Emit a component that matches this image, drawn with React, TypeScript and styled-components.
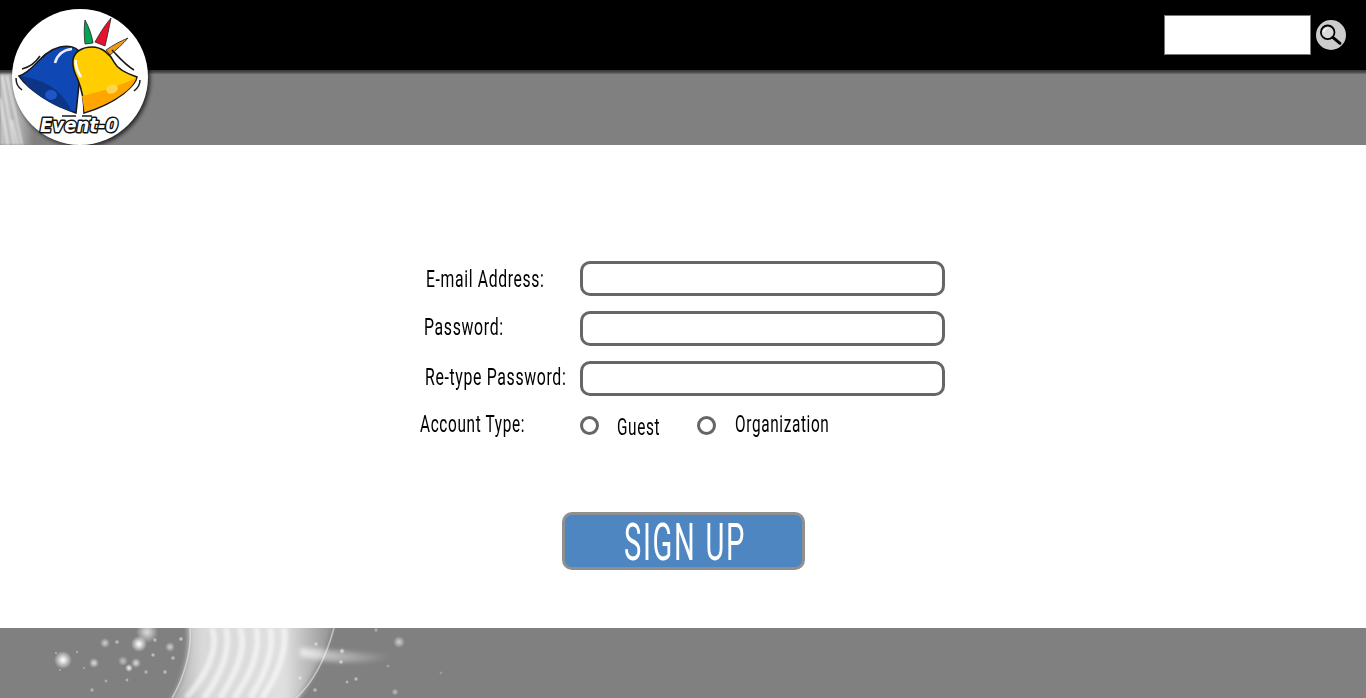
import styled, { createGlobalStyle } from "styled-components";

const GlobalStyle = createGlobalStyle`
    html, body {
        margin: 0;
        padding: 0;
        background: #fff;
    }
    body {
        font-family: "Roboto", "Liberation Sans", sans-serif;
    }
`;

const DivRoot = styled.div`
    position: relative;
    display: flex;
    flex-direction: column;
    width: 1366px;
    height: 698px;
    overflow: hidden;
`;

const Header = styled.header`
    position: relative;
    display: flex;
    flex-direction: column;
    height: 145px;
    flex: none;
`;

const TopBar = styled.div`
    height: 70px;
    background: #000;
    display: flex;
    justify-content: flex-end;
    align-items: flex-start;
    gap: 5px;
    padding: 15px 20px 0 0;
    box-sizing: border-box;
`;

const Divider = styled.div`
    height: 4px;
    background: linear-gradient(#333333, #4a4a4a 50%, #6e6e6e);
`;

const GreyBand = styled.div`
    flex: 1;
    background: #808080;
`;

const SearchInput = styled.input`
    width: 147px;
    height: 40px;
    box-sizing: border-box;
    border: 1px solid #777;
    background: #fff;
    padding: 0 4px;
    outline: none;
`;

const SearchButton = styled.button`
    width: 30px;
    height: 30px;
    margin-top: 5px;
    padding: 0;
    border: 0;
    border-radius: 50%;
    background: #cccccc;
    display: flex;
    align-items: center;
    justify-content: center;
`;

const LogoWrap = styled.div`
    position: absolute;
    left: 0;
    top: 0;
    width: 160px;
    height: 145px;
`;

const Main = styled.main`
    flex: 1;
    background: #fff;
    display: flex;
    flex-direction: column;
    align-items: flex-start;
    padding: 116px 0 0 420px;
    box-sizing: border-box;
`;

const Form = styled.form`
    display: flex;
    flex-direction: column;
    gap: 15px;
`;

const Row = styled.div`
    display: flex;
    align-items: center;
    height: 35px;
`;

const RadioRow = styled(Row)`
    height: 28px;
`;

const LabelCell = styled.div<{ $indent: number; $shift?: number }>`
    width: 160px;
    flex: none;
    padding-left: ${p => p.$indent}px;
    box-sizing: border-box;
    margin-top: ${p => p.$shift || 0}px;
`;

const Narrow = styled.span<{ $size?: number; $scale?: number; $spacing?: number }>`
    display: inline-block;
    white-space: nowrap;
    font-size: ${p => p.$size || 24}px;
    line-height: 1;
    letter-spacing: ${p => p.$spacing ?? 1}px;
    color: #000;
    transform: scaleX(${p => p.$scale || 0.64});
    transform-origin: left center;
`;

const TextInput = styled.input`
    width: 365px;
    height: 35px;
    box-sizing: border-box;
    border: 3px solid #666666;
    border-radius: 10px;
    background: #fff;
    padding: 0 8px;
    outline: none;
`;

const RadioOption = styled.label<{ $width: number; $textShift: number; $gap: number }>`
    display: flex;
    align-items: center;
    width: ${p => p.$width}px;
    flex: none;
    gap: ${p => p.$gap}px;
    span {
        margin-top: ${p => p.$textShift}px;
    }
`;

const RadioCircle = styled.i`
    display: block;
    width: 19px;
    height: 19px;
    box-sizing: border-box;
    border: 3px solid #666666;
    border-radius: 50%;
    background: #fff;
    flex: none;
`;

const SubmitRow = styled.div`
    margin: 58px 0 0 142px;
`;

const SubmitButton = styled.button`
    width: 243px;
    height: 58px;
    box-sizing: border-box;
    border: 3px solid #8f8f8f;
    border-radius: 10px;
    background: #4d86c1;
    padding: 3px 0 0 59px;
    display: flex;
    align-items: center;
    justify-content: flex-start;
    font-family: inherit;
`;

const SubmitText = styled(Narrow)`
    color: #fff;
`;

const Footer = styled.footer`
    height: 70px;
    flex: none;
    background: #808080;
    overflow: hidden;
`;

const fields = [
    { caption: "E-mail Address:", indent: 6, shift: 1, scale: 0.655 },
    { caption: "Password:", indent: 4, shift: -3, scale: 0.66 },
    { caption: "Re-type Password:", indent: 5, shift: -3, scale: 0.66 },
];

const SearchIcon = () => (
    <svg width="26" height="26" viewBox="0 0 26 26" fill="none">
        <circle cx="9.7" cy="10.3" r="6.8" fill="#d8d8d8" stroke="#000" strokeWidth="1.8" />
        <path d="M14.8 15.4 L22 21.4" stroke="#000" strokeWidth="3" strokeLinecap="round" />
        <path d="M5.8 10 A4 4 0 0 1 9.4 6.3" stroke="#fff" strokeWidth="1.3" />
    </svg>
);

const Logo = () => (
    <svg width="160" height="145" viewBox="0 0 160 145">
        <defs>
            <linearGradient id="sheen" x1="0" y1="0" x2="1" y2="0">
                <stop offset="0" stopColor="#e0e0e0" />
                <stop offset="0.6" stopColor="#c0c0c0" />
                <stop offset="1" stopColor="#808080" />
            </linearGradient>
            <filter id="soft" x="-20%" y="-20%" width="140%" height="140%">
                <feGaussianBlur stdDeviation="2.2" />
            </filter>
            <filter id="streak" x="-20%" y="-20%" width="140%" height="140%">
                <feGaussianBlur stdDeviation="0.8" />
            </filter>
        </defs>
        <rect x="0" y="74" width="34" height="71" fill="url(#sheen)" opacity="0.7" filter="url(#streak)" />
        <path d="M2 76 L14 145 M7 76 L22 145 M0 98 L8 145 M12 120 L18 145" stroke="#fff" strokeWidth="2" opacity="0.6" filter="url(#streak)" />
        <circle cx="82" cy="79" r="68" fill="#000" opacity="0.75" filter="url(#soft)" />
        <circle cx="80" cy="77" r="68" fill="#fff" />
        {/* spikes */}
        <path d="M85 20 C89 27 92 36 93 43 L85 44 C84 36 84 27 85 20 Z" fill="#00a651" stroke="#222" strokeWidth="0.8" />
        <path d="M111 18 C109 28 107 38 105 46 L95 42 C100 33 105 25 111 18 Z" fill="#e8112d" stroke="#222" strokeWidth="0.8" />
        <path d="M128 38 C121 41 113 45 106 50 L110 55 C116 50 123 44 128 38 Z" fill="#ee9a1c" stroke="#222" strokeWidth="0.8" />
        {/* blue bell */}
        <path d="M19 76 C36 70 40 52 60 47 C70 45 78 48 82 55 L76 113 C56 106 30 92 19 76 Z" fill="#0f47b4" stroke="#1a1a1a" strokeWidth="1.6" />
        <path d="M20 76 C34 78 52 84 60 94 C66 100 70 107 72 112 C50 105 30 92 20 76 Z" fill="#0c3585" />
        <ellipse cx="51" cy="95" rx="6" ry="5" fill="#1c56c8" />
        <path d="M55 63 C57 55 63 50 72 49" stroke="#fff" strokeWidth="2.6" fill="none" opacity="0.9" />
        {/* yellow bell */}
        <path d="M73 60 C74 52 82 47 92 47 C102 47 110 54 114 62 C118 70 128 74 137 77 C136 84 120 102 84 113 C84 100 82 90 78 80 C74 72 72 66 73 60 Z" fill="#ffcd00" stroke="#1a1a1a" strokeWidth="1.6" />
        <path d="M82 96 C100 92 125 84 136 78 C135 85 120 101 84.5 112 Z" fill="#ffa500" />
        <ellipse cx="112" cy="89" rx="6" ry="4.5" fill="#ffd44d" transform="rotate(-20 112 89)" />
        <path d="M75.5 60 C75.5 66 77 71 81 77" stroke="#fff" strokeWidth="2.6" fill="none" />
        {/* motion lines */}
        <path d="M22 69 C30 67 36 62 40 56 M16 78 C16 84 19 88 22 90 M46 54 L42 58 M112 50 C118 56 124 64 134 70 M140 80 C140 84 138 88 134 91 M62 116 H76 M82 116 H92" stroke="#1a1a1a" strokeWidth="1.5" fill="none" />
        <text
            x="40"
            y="132"
            textLength="78"
            lengthAdjust="spacingAndGlyphs"
            fontFamily="DejaVu Sans, sans-serif"
            fontWeight="700"
            fontStyle="italic"
            fontSize="19"
            fill="#fff"
            stroke="#111"
            strokeWidth="3"
            strokeLinejoin="round"
            paintOrder="stroke"
        >
            Event-0
        </text>
    </svg>
);

const sparkles: Array<[number, number, number, number]> = [
    [63, 660, 9, 1], [139, 644, 8, 1], [94, 663, 5, 0.7], [105, 643, 5, 0.6], [123, 661, 5, 0.5], [136, 663, 5, 0.7],
    [129, 668, 4, 0.9], [170, 647, 5, 0.6], [117, 642, 2.5, 0.6], [153, 655, 2.5, 0.6], [165, 672, 2.5, 0.6], [147, 632, 11, 0.7],
    [173, 658, 2.5, 0.6], [106, 681, 2, 0.5], [92, 690, 2.5, 0.5], [127, 680, 2, 0.6], [146, 672, 2.5, 0.5], [399, 642, 6, 0.6],
    [342, 651, 3, 0.7], [341, 662, 2.5, 0.7], [356, 679, 2.5, 0.6], [316, 644, 2.5, 0.6], [388, 666, 2, 0.4], [395, 692, 3.5, 0.5],
    [315, 690, 2.5, 0.6], [300, 678, 2.5, 0.6], [347, 682, 2, 0.6], [441, 673, 2, 0.3], [181, 639, 2.5, 0.7], [155, 640, 2.5, 0.6],
    [77, 652, 1.5, 0.6], [84, 668, 1.5, 0.5], [56, 653, 1.5, 0.6], [60, 670, 1.5, 0.5], [376, 630, 2.5, 0.4],
];

const FooterArt = () => (
    <svg width="1366" height="70" viewBox="0 628 1366 70">
        <defs>
            <radialGradient id="spark">
                <stop offset="0" stopColor="#fff" stopOpacity="1" />
                <stop offset="0.25" stopColor="#fff" stopOpacity="0.8" />
                <stop offset="1" stopColor="#fff" stopOpacity="0" />
            </radialGradient>
            <linearGradient id="band" x1="0" y1="0" x2="1" y2="0">
                <stop offset="0" stopColor="#fff" stopOpacity="0.3" />
                <stop offset="0.2" stopColor="#fff" stopOpacity="0.7" />
                <stop offset="0.7" stopColor="#fff" stopOpacity="0.75" />
                <stop offset="1" stopColor="#fff" stopOpacity="0.1" />
            </linearGradient>
            <linearGradient id="flare" x1="0" y1="0" x2="1" y2="0">
                <stop offset="0" stopColor="#fff" stopOpacity="0.7" />
                <stop offset="1" stopColor="#fff" stopOpacity="0" />
            </linearGradient>
            <filter id="glow" x="-30%" y="-30%" width="160%" height="160%">
                <feGaussianBlur stdDeviation="2.5" />
            </filter>
            <filter id="glowLite" x="-30%" y="-30%" width="160%" height="160%">
                <feGaussianBlur stdDeviation="1.6" />
            </filter>
        </defs>
        <path d="M187 620 H335 C328 650 312 680 293 706 H168 C184 680 192 650 187 620 Z" fill="url(#band)" filter="url(#glow)" />
        <path
            d="M212 628 C220 650 204 678 186 698 M226 628 C232 650 218 680 204 698 M240 628 C248 650 232 680 220 698 M256 628 C262 650 248 680 234 698 M270 628 C276 650 262 680 250 698 M284 628 C288 650 276 678 262 698"
            stroke="#fff"
            strokeWidth="6"
            opacity="0.55"
            fill="none"
            filter="url(#glowLite)"
        />
        <path d="M190 628 C192 650 184 678 172 698 M334 628 C328 650 316 680 296 698" stroke="#ececec" strokeWidth="1.5" opacity="0.6" fill="none" />
        <path d="M300 648 C330 650 370 654 395 656 C370 664 330 664 300 656 Z" fill="url(#flare)" filter="url(#glow)" />
        <path d="M95 644 H150" stroke="#fff" strokeWidth="1.5" opacity="0.3" filter="url(#glowLite)" />
        {sparkles.map(([cx, cy, r, alpha]) => (
            <circle key={`${cx}-${cy}`} cx={cx} cy={cy} r={r} fill="url(#spark)" opacity={alpha} />
        ))}
    </svg>
);

const App = () => {
    return (
        <DivRoot>
            <GlobalStyle />
            <Header>
                <TopBar>
                    <SearchInput type="text" aria-label="Search" />
                    <SearchButton type="button" aria-label="Search">
                        <SearchIcon />
                    </SearchButton>
                </TopBar>
                <Divider />
                <GreyBand />
                <LogoWrap>
                    <Logo />
                </LogoWrap>
            </Header>
            <Main>
                <Form onSubmit={e => e.preventDefault()}>
                    {fields.map(field => (
                        <Row key={field.caption}>
                            <LabelCell $indent={field.indent} $shift={field.shift}>
                                <Narrow $scale={field.scale}>{field.caption}</Narrow>
                            </LabelCell>
                            <TextInput type="text" />
                        </Row>
                    ))}
                    <RadioRow>
                        <LabelCell $indent={0} $shift={-3}>
                            <Narrow>Account Type:</Narrow>
                        </LabelCell>
                        <RadioOption $width={117} $textShift={3} $gap={18}>
                            <RadioCircle />
                            <Narrow>Guest</Narrow>
                        </RadioOption>
                        <RadioOption $width={150} $textShift={-2} $gap={19}>
                            <RadioCircle />
                            <Narrow>Organization</Narrow>
                        </RadioOption>
                    </RadioRow>
                    <SubmitRow>
                        <SubmitButton type="submit">
                            <SubmitText $size={52} $scale={0.56} $spacing={3}>SIGN UP</SubmitText>
                        </SubmitButton>
                    </SubmitRow>
                </Form>
            </Main>
            <Footer>
                <FooterArt />
            </Footer>
        </DivRoot>
    );
};

export default App;
